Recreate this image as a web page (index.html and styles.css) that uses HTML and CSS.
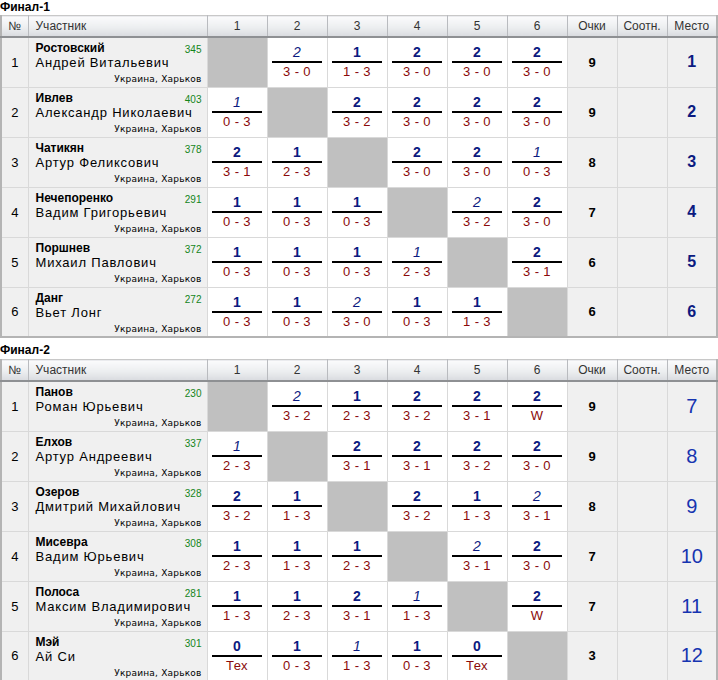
FILE: index.html
```html
<!DOCTYPE html>
<html>
<head>
<meta charset="utf-8">
<link rel="stylesheet" href="styles.css">
</head>
<body>
<h2 class="title">Финал-1</h2>
<table class="grid">
<colgroup><col class="c-no"><col class="c-name"><col class="c-g"><col class="c-g"><col class="c-g"><col class="c-g"><col class="c-g"><col class="c-g"><col class="c-s"><col class="c-s"><col class="c-s"></colgroup>
<thead><tr><th>№</th><th class="h-name">Участник</th><th>1</th><th>2</th><th>3</th><th>4</th><th>5</th><th>6</th><th>Очки</th><th>Соотн.</th><th>Место</th></tr></thead>
<tbody>
<tr><td class="no">1</td><td class="nm"><div class="top"><b>Ростовский</b><span class="rt">345</span></div><div class="fn">Андрей Витальевич</div><div class="loc">Украина, Харьков</div></td>
<td class="x"></td>
<td class="g"><div class="res"><span class="w i">2</span><span class="sc">3 - 0</span></div></td>
<td class="g"><div class="res"><span class="w">1</span><span class="sc">1 - 3</span></div></td>
<td class="g"><div class="res"><span class="w">2</span><span class="sc">3 - 0</span></div></td>
<td class="g"><div class="res"><span class="w">2</span><span class="sc">3 - 0</span></div></td>
<td class="g"><div class="res"><span class="w">2</span><span class="sc">3 - 0</span></div></td>
<td class="pts">9</td><td class="rat"></td><td class="pl">1</td></tr>

<tr><td class="no">2</td><td class="nm"><div class="top"><b>Ивлев</b><span class="rt">403</span></div><div class="fn">Александр Николаевич</div><div class="loc">Украина, Харьков</div></td>
<td class="g"><div class="res"><span class="w i">1</span><span class="sc">0 - 3</span></div></td>
<td class="x"></td>
<td class="g"><div class="res"><span class="w">2</span><span class="sc">3 - 2</span></div></td>
<td class="g"><div class="res"><span class="w">2</span><span class="sc">3 - 0</span></div></td>
<td class="g"><div class="res"><span class="w">2</span><span class="sc">3 - 0</span></div></td>
<td class="g"><div class="res"><span class="w">2</span><span class="sc">3 - 0</span></div></td>
<td class="pts">9</td><td class="rat"></td><td class="pl">2</td></tr>

<tr><td class="no">3</td><td class="nm"><div class="top"><b>Чатикян</b><span class="rt">378</span></div><div class="fn">Артур Феликсович</div><div class="loc">Украина, Харьков</div></td>
<td class="g"><div class="res"><span class="w">2</span><span class="sc">3 - 1</span></div></td>
<td class="g"><div class="res"><span class="w">1</span><span class="sc">2 - 3</span></div></td>
<td class="x"></td>
<td class="g"><div class="res"><span class="w">2</span><span class="sc">3 - 0</span></div></td>
<td class="g"><div class="res"><span class="w">2</span><span class="sc">3 - 0</span></div></td>
<td class="g"><div class="res"><span class="w i">1</span><span class="sc">0 - 3</span></div></td>
<td class="pts">8</td><td class="rat"></td><td class="pl">3</td></tr>

<tr><td class="no">4</td><td class="nm"><div class="top"><b>Нечепоренко</b><span class="rt">291</span></div><div class="fn">Вадим Григорьевич</div><div class="loc">Украина, Харьков</div></td>
<td class="g"><div class="res"><span class="w">1</span><span class="sc">0 - 3</span></div></td>
<td class="g"><div class="res"><span class="w">1</span><span class="sc">0 - 3</span></div></td>
<td class="g"><div class="res"><span class="w">1</span><span class="sc">0 - 3</span></div></td>
<td class="x"></td>
<td class="g"><div class="res"><span class="w i">2</span><span class="sc">3 - 2</span></div></td>
<td class="g"><div class="res"><span class="w">2</span><span class="sc">3 - 0</span></div></td>
<td class="pts">7</td><td class="rat"></td><td class="pl">4</td></tr>

<tr><td class="no">5</td><td class="nm"><div class="top"><b>Поршнев</b><span class="rt">372</span></div><div class="fn">Михаил Павлович</div><div class="loc">Украина, Харьков</div></td>
<td class="g"><div class="res"><span class="w">1</span><span class="sc">0 - 3</span></div></td>
<td class="g"><div class="res"><span class="w">1</span><span class="sc">0 - 3</span></div></td>
<td class="g"><div class="res"><span class="w">1</span><span class="sc">0 - 3</span></div></td>
<td class="g"><div class="res"><span class="w i">1</span><span class="sc">2 - 3</span></div></td>
<td class="x"></td>
<td class="g"><div class="res"><span class="w">2</span><span class="sc">3 - 1</span></div></td>
<td class="pts">6</td><td class="rat"></td><td class="pl">5</td></tr>

<tr><td class="no">6</td><td class="nm"><div class="top"><b>Данг</b><span class="rt">272</span></div><div class="fn">Вьет Лонг</div><div class="loc">Украина, Харьков</div></td>
<td class="g"><div class="res"><span class="w">1</span><span class="sc">0 - 3</span></div></td>
<td class="g"><div class="res"><span class="w">1</span><span class="sc">0 - 3</span></div></td>
<td class="g"><div class="res"><span class="w i">2</span><span class="sc">3 - 0</span></div></td>
<td class="g"><div class="res"><span class="w">1</span><span class="sc">0 - 3</span></div></td>
<td class="g"><div class="res"><span class="w">1</span><span class="sc">1 - 3</span></div></td>
<td class="x"></td>
<td class="pts">6</td><td class="rat"></td><td class="pl">6</td></tr>
</tbody>
</table>

<h2 class="title second">Финал-2</h2>
<table class="grid">
<colgroup><col class="c-no"><col class="c-name"><col class="c-g"><col class="c-g"><col class="c-g"><col class="c-g"><col class="c-g"><col class="c-g"><col class="c-s"><col class="c-s"><col class="c-s"></colgroup>
<thead><tr><th>№</th><th class="h-name">Участник</th><th>1</th><th>2</th><th>3</th><th>4</th><th>5</th><th>6</th><th>Очки</th><th>Соотн.</th><th>Место</th></tr></thead>
<tbody>
<tr><td class="no">1</td><td class="nm"><div class="top"><b>Панов</b><span class="rt">230</span></div><div class="fn">Роман Юрьевич</div><div class="loc">Украина, Харьков</div></td>
<td class="x"></td>
<td class="g"><div class="res"><span class="w i">2</span><span class="sc">3 - 2</span></div></td>
<td class="g"><div class="res"><span class="w">1</span><span class="sc">2 - 3</span></div></td>
<td class="g"><div class="res"><span class="w">2</span><span class="sc">3 - 2</span></div></td>
<td class="g"><div class="res"><span class="w">2</span><span class="sc">3 - 1</span></div></td>
<td class="g"><div class="res"><span class="w">2</span><span class="sc">W</span></div></td>
<td class="pts">9</td><td class="rat"></td><td class="pl big">7</td></tr>

<tr><td class="no">2</td><td class="nm"><div class="top"><b>Елхов</b><span class="rt">337</span></div><div class="fn">Артур Андреевич</div><div class="loc">Украина, Харьков</div></td>
<td class="g"><div class="res"><span class="w i">1</span><span class="sc">2 - 3</span></div></td>
<td class="x"></td>
<td class="g"><div class="res"><span class="w">2</span><span class="sc">3 - 1</span></div></td>
<td class="g"><div class="res"><span class="w">2</span><span class="sc">3 - 1</span></div></td>
<td class="g"><div class="res"><span class="w">2</span><span class="sc">3 - 2</span></div></td>
<td class="g"><div class="res"><span class="w">2</span><span class="sc">3 - 0</span></div></td>
<td class="pts">9</td><td class="rat"></td><td class="pl big">8</td></tr>

<tr><td class="no">3</td><td class="nm"><div class="top"><b>Озеров</b><span class="rt">328</span></div><div class="fn">Дмитрий Михайлович</div><div class="loc">Украина, Харьков</div></td>
<td class="g"><div class="res"><span class="w">2</span><span class="sc">3 - 2</span></div></td>
<td class="g"><div class="res"><span class="w">1</span><span class="sc">1 - 3</span></div></td>
<td class="x"></td>
<td class="g"><div class="res"><span class="w">2</span><span class="sc">3 - 2</span></div></td>
<td class="g"><div class="res"><span class="w">1</span><span class="sc">1 - 3</span></div></td>
<td class="g"><div class="res"><span class="w i">2</span><span class="sc">3 - 1</span></div></td>
<td class="pts">8</td><td class="rat"></td><td class="pl big">9</td></tr>

<tr><td class="no">4</td><td class="nm"><div class="top"><b>Мисевра</b><span class="rt">308</span></div><div class="fn">Вадим Юрьевич</div><div class="loc">Украина, Харьков</div></td>
<td class="g"><div class="res"><span class="w">1</span><span class="sc">2 - 3</span></div></td>
<td class="g"><div class="res"><span class="w">1</span><span class="sc">1 - 3</span></div></td>
<td class="g"><div class="res"><span class="w">1</span><span class="sc">2 - 3</span></div></td>
<td class="x"></td>
<td class="g"><div class="res"><span class="w i">2</span><span class="sc">3 - 1</span></div></td>
<td class="g"><div class="res"><span class="w">2</span><span class="sc">3 - 0</span></div></td>
<td class="pts">7</td><td class="rat"></td><td class="pl big">10</td></tr>

<tr><td class="no">5</td><td class="nm"><div class="top"><b>Полоса</b><span class="rt">281</span></div><div class="fn">Максим Владимирович</div><div class="loc">Украина, Харьков</div></td>
<td class="g"><div class="res"><span class="w">1</span><span class="sc">1 - 3</span></div></td>
<td class="g"><div class="res"><span class="w">1</span><span class="sc">2 - 3</span></div></td>
<td class="g"><div class="res"><span class="w">2</span><span class="sc">3 - 1</span></div></td>
<td class="g"><div class="res"><span class="w i">1</span><span class="sc">1 - 3</span></div></td>
<td class="x"></td>
<td class="g"><div class="res"><span class="w">2</span><span class="sc">W</span></div></td>
<td class="pts">7</td><td class="rat"></td><td class="pl big">11</td></tr>

<tr><td class="no">6</td><td class="nm"><div class="top"><b>Мэй</b><span class="rt">301</span></div><div class="fn">Ай Си</div><div class="loc">Украина, Харьков</div></td>
<td class="g"><div class="res"><span class="w">0</span><span class="sc">Тех</span></div></td>
<td class="g"><div class="res"><span class="w">1</span><span class="sc">0 - 3</span></div></td>
<td class="g"><div class="res"><span class="w i">1</span><span class="sc">1 - 3</span></div></td>
<td class="g"><div class="res"><span class="w">1</span><span class="sc">0 - 3</span></div></td>
<td class="g"><div class="res"><span class="w">0</span><span class="sc">Тех</span></div></td>
<td class="x"></td>
<td class="pts">3</td><td class="rat"></td><td class="pl big">12</td></tr>
</tbody>
</table>
</body>
</html>
```

FILE: styles.css
```css
html, body {
  margin: 0;
  padding: 0;
  background: #ffffff;
  font-family: "Liberation Sans", Arial, sans-serif;
  color: #000;
}

.title {
  margin: 0;
  font-size: 12px;
  font-weight: bold;
  line-height: 14px;
  height: 15px;
  color: #000;
}

.title.second {
  margin-top: 5px;
  height: 16px;
}

.grid {
  width: 717px;
  table-layout: fixed;
  border-collapse: collapse;
  border: 2px solid #b4b4b4;
  border-top: 1px solid #c8c8c8;
}

.c-no { width: 27px; }
.c-name { width: 179px; }
.c-g { width: 60px; }
.c-s { width: 50px; }

.grid th {
  height: 20px;
  padding: 0;
  font-weight: normal;
  font-size: 12px;
  color: #333;
  text-align: center;
  background: linear-gradient(#fbfbfc, #eceef0 55%, #d9dbdf);
  border-left: 1px solid #b9bbbf;
  border-bottom: 2px solid #8e9093;
}

.grid th:first-child { border-left: none; }

.grid th.h-name {
  text-align: left;
  padding-left: 7px;
}

.grid td {
  height: 50px;
  padding: 0;
  border: 1px solid #d9d9d9;
  vertical-align: middle;
  box-sizing: border-box;
}

.grid tbody tr:first-child td { border-top: 2px solid #f4f4f4; }

.no {
  background: #f0f0f0;
  text-align: center;
  font-size: 13px;
}

.nm {
  background: #f0f0f0;
  padding: 0 5px 0 7px !important;
  vertical-align: top !important;
}

.top {
  display: flex;
  justify-content: space-between;
  align-items: flex-end;
  margin-top: 3px;
  height: 14px;
}

.top b {
  font-size: 12px;
  line-height: 14px;
}

.rt {
  font-size: 10px;
  color: #13851a;
  line-height: 11px;
}

.fn {
  font-size: 13px;
  letter-spacing: 0.8px;
  line-height: 15px;
}

.loc {
  text-align: right;
  font-family: "DejaVu Sans", Verdana, sans-serif;
  font-size: 9px;
  letter-spacing: 0.2px;
  line-height: 12px;
  margin-top: 3px;
}

.x { background: #c0c0c0; }

.g { background: #fff; }

.res {
  display: flex;
  flex-direction: column;
  align-items: center;
}

.w {
  width: 50px;
  text-align: center;
  border-bottom: 2px solid #000;
  font-size: 14px;
  font-weight: bold;
  color: #0b1a80;
  line-height: 16px;
  padding-bottom: 1px;
}

.w.i {
  font-weight: normal;
  font-style: italic;
}

.sc {
  font-size: 13px;
  color: #8a0a0a;
  line-height: 16px;
  padding-top: 1px;
  letter-spacing: 0.4px;
}

.pts {
  background: #f0f0f0;
  text-align: center;
  font-weight: bold;
  font-size: 13px;
}

.rat { background: #f0f0f0; }

.pl {
  background: #f0f0f0;
  text-align: center;
  font-weight: bold;
  font-size: 16px;
  color: #0b1a80;
}

.pl.big {
  font-weight: normal;
  font-size: 20px;
  color: #1634b0;
}
```
